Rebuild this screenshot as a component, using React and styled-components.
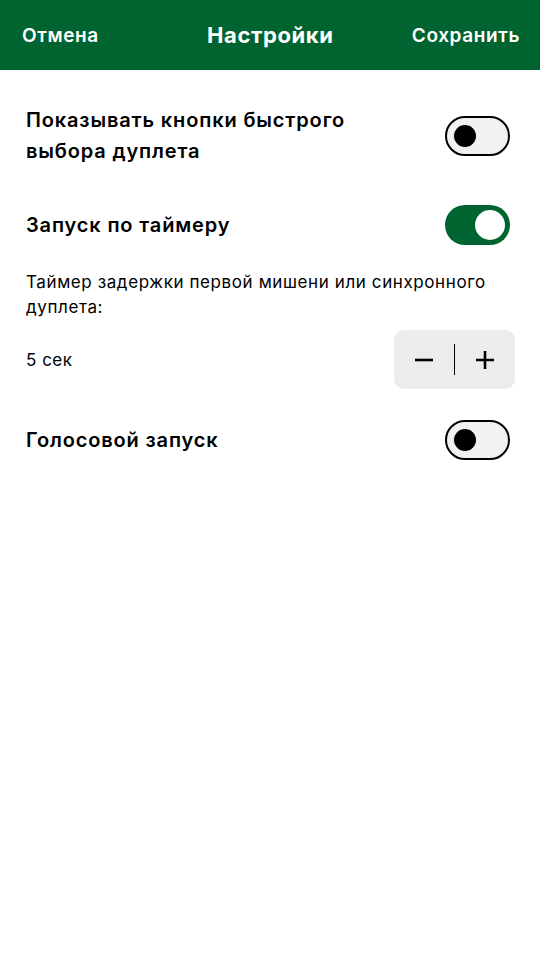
import React, { useState } from 'react';
import styled, { createGlobalStyle } from 'styled-components';

const Global = createGlobalStyle`
  body {
    margin: 0;
    background: #fff;
    font-family: Inter, "Noto Sans", sans-serif;
    color: #000;
  }
`;

const Page = styled.div`
  width: 540px;
  min-height: 960px;
  background: #fff;
`;

const Header = styled.header`
  height: 70px;
  background: #006430;
  display: flex;
  align-items: center;
  justify-content: space-between;
  padding: 0 20px 0 22px;
  box-sizing: border-box;
  color: #fff;
`;

const HeaderButton = styled.button`
  border: none;
  background: none;
  color: #fff;
  font-family: inherit;
  font-size: 19px;
  font-weight: 600;
  letter-spacing: 0.6px;
  padding: 0;
  cursor: pointer;
`;

const Title = styled.h1`
  margin: 0;
  font-size: 22px;
  font-weight: 700;
  letter-spacing: 0.6px;
  margin-left: 30px;
`;

const Content = styled.main`
  display: flex;
  flex-direction: column;
  padding: 35px 25px 0 26px;
`;

const Row = styled.div`
  display: flex;
  align-items: center;
  justify-content: space-between;
  margin-top: ${p => p.$gap || 0}px;
`;

const Label = styled.div`
  font-size: 20px;
  font-weight: 600;
  line-height: 31px;
  letter-spacing: 0.85px;
  max-width: 360px;
`;

const Description = styled.p`
  margin: ${p => p.$gap || 0}px 0 0;
  font-size: 17px;
  line-height: 25px;
  letter-spacing: 0.6px;
  max-width: 480px;
`;

const Value = styled.span`
  font-size: 17px;
  letter-spacing: 0.5px;
`;

const Track = styled.button`
  width: 65px;
  height: 40px;
  border-radius: 20px;
  box-sizing: border-box;
  border: ${p => (p.$on ? 'none' : '2.5px solid #000')};
  background: ${p => (p.$on ? '#006430' : '#f1f1f3')};
  margin-right: 5px;
  padding: 0 ${p => (p.$on ? 5 : 7)}px;
  display: flex;
  align-items: center;
  justify-content: ${p => (p.$on ? 'flex-end' : 'flex-start')};
  cursor: pointer;
  flex-shrink: 0;
`;

const Knob = styled.span`
  display: block;
  width: ${p => (p.$on ? 30 : 22)}px;
  height: ${p => (p.$on ? 30 : 22)}px;
  border-radius: 50%;
  background: ${p => (p.$on ? '#fff' : '#000')};
`;

const Stepper = styled.div`
  width: 121px;
  height: 59px;
  border-radius: 10px;
  background: #ececee;
  display: flex;
  align-items: center;
`;

const StepButton = styled.button`
  flex: 1;
  height: 100%;
  border: none;
  background: none;
  display: flex;
  align-items: center;
  justify-content: center;
  cursor: pointer;
  padding: 0;
`;

const Divider = styled.span`
  width: 1.5px;
  height: 31px;
  background: #000;
`;

function Toggle({ on, onChange }) {
  return (
    <Track $on={on} onClick={() => onChange(!on)}>
      <Knob $on={on} />
    </Track>
  );
}

export default function App() {
  const [quick, setQuick] = useState(false);
  const [timer, setTimer] = useState(true);
  const [voice, setVoice] = useState(false);
  const [delay, setDelay] = useState(5);

  return (
    <Page>
      <Global />
      <Header>
        <HeaderButton>Отмена</HeaderButton>
        <Title>Настройки</Title>
        <HeaderButton>Сохранить</HeaderButton>
      </Header>
      <Content>
        <Row>
          <Label>Показывать кнопки быстрого выбора дуплета</Label>
          <Toggle on={quick} onChange={setQuick} />
        </Row>
        <Row $gap={38}>
          <Label>Запуск по таймеру</Label>
          <Toggle on={timer} onChange={setTimer} />
        </Row>
        <Description $gap={25}>
          Таймер задержки первой мишени или синхронного дуплета:
        </Description>
        <Row $gap={10}>
          <Value>{delay} сек</Value>
          <Stepper>
            <StepButton onClick={() => setDelay(Math.max(0, delay - 1))}>
              <svg width="20" height="20" viewBox="0 0 20 20">
                <path d="M1 10h18" stroke="#000" strokeWidth="2.6" />
              </svg>
            </StepButton>
            <Divider />
            <StepButton onClick={() => setDelay(delay + 1)}>
              <svg width="20" height="20" viewBox="0 0 20 20">
                <path d="M1 10h18M10 1v18" stroke="#000" strokeWidth="2.6" />
              </svg>
            </StepButton>
          </Stepper>
        </Row>
        <Row $gap={31}>
          <Label>Голосовой запуск</Label>
          <Toggle on={voice} onChange={setVoice} />
        </Row>
      </Content>
    </Page>
  );
}
